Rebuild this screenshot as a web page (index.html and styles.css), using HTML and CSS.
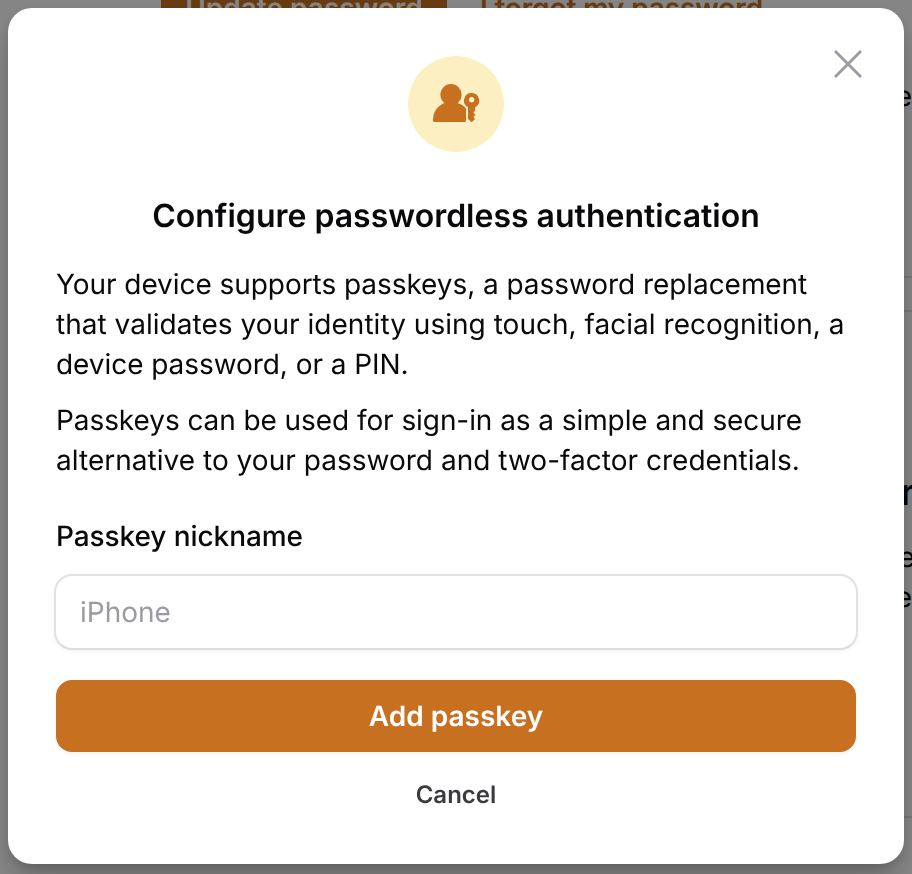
FILE: index.html
```html
<!DOCTYPE html>
<html lang="en">
<head>
<meta charset="utf-8">
<title>Configure passwordless authentication</title>
<link rel="stylesheet" href="styles.css">
</head>
<body>
<div class="page" aria-hidden="true">
  <div class="page-actions">
    <span class="page-button">Update password</span>
    <span class="page-link">I forgot my password</span>
  </div>
  <p class="page-text page-intro">e</p>
  <div class="page-divider"></div>
  <h2 class="page-heading">r</h2>
  <p class="page-text page-edge">e</p>
  <p class="page-text">e</p>
  <div class="page-rule"></div>
</div>
<div class="overlay">
  <main class="dialog" role="dialog" aria-labelledby="title">
    <button class="close" aria-label="Close">
      <svg viewBox="0 0 32 32"><path d="M3 3 29 29M29 3 3 29"/></svg>
    </button>
    <div class="badge">
      <svg viewBox="0 0 48 40">
        <circle cx="19" cy="10.700" r="10.6"/>
        <path d="M14 16H24V18.500C30 20.500 32 22 34 24.500V36.500Q34 38 32.500 38H2.500Q1 38 1 36.500C1 28 5 21.500 14 18.500Z"/>
        <path fill-rule="evenodd" d="M39.700 9A7.600 7.600 0 0 1 43.200 23.300V26.500L41.500 28.500 43.500 31 41.500 33 43 35 39.700 38.300 36 35V23.300A7.600 7.600 0 0 1 39.700 9ZM39.700 13.100A2.600 2.600 0 1 0 39.700 18.300 2.600 2.600 0 0 0 39.700 13.100Z"/>
      </svg>
    </div>
    <h1 class="title" id="title">Configure passwordless authentication</h1>
    <div class="copy">
      <p><span class="snug">Your device supports passkeys, a password replacement</span> <span class="loose">that validates your identity using touch, facial recognition, a</span> <span class="snug">device password, or a PIN.</span></p>
      <p><span class="tight">Passkeys can be used for sign-in as a simple and secure</span> <span class="loose">alternative to your password and two-factor credentials.</span></p>
    </div>
    <label class="label" for="nickname">Passkey nickname</label>
    <input class="input" id="nickname" type="text" placeholder="iPhone">
    <button class="submit">Add passkey</button>
    <button class="cancel">Cancel</button>
  </main>
</div>
</body>
</html>
```
FILE: styles.css
```css
* { box-sizing: border-box; }
body {
  margin: 0;
  height: 874px;
  overflow: hidden;
  background: #fff;
  color: #09090b;
  font-family: Inter, "Liberation Sans", sans-serif;
  text-rendering: geometricPrecision;
}
h1, h2, p { margin: 0; }
button { border: 0; padding: 0; background: none; font-family: inherit; text-rendering: inherit; }

.page { height: 874px; overflow: hidden; }
.page-actions {
  display: flex;
  margin-top: -28px;
  padding-left: 161px;
  height: 72px;
  font-size: 28px;
  font-weight: 600;
  line-height: 72px;
  white-space: nowrap;
}
.page-button { width: 286px; background: #c77020; color: #fff; text-align: center; }
.page-link { margin-left: 33px; color: #c77020; letter-spacing: -.1px; }
.page-text { font-size: 28px; line-height: 40px; text-align: right; }
.page-intro { margin-top: 32px; }
.page-divider {
  width: 20px;
  height: 36px;
  margin: 160px 0 0 auto;
  border: solid #e4e4e7;
  border-width: 2px 0;
}
.page-heading {
  margin-top: 157px;
  padding-left: 901px;
  font-size: 36px;
  font-weight: 500;
  line-height: 46px;
}
.page-edge { margin-top: 22px; margin-right: -3px; }
.page-rule { width: 20px; height: 2px; margin: 199px 0 0 auto; background: #e4e4e7; }

.overlay {
  position: fixed;
  inset: 0;
  padding: 8px;
  background: rgba(0, 0, 0, .48);
}
.dialog {
  position: relative;
  display: flex;
  flex-direction: column;
  height: 856px;
  padding: 48px;
  border-radius: 24px;
  background: #fff;
  box-shadow: 0 20px 30px -6px rgba(0, 0, 0, .22), 0 4px 12px rgba(0, 0, 0, .12);
}
.close { position: absolute; top: 40px; right: 40px; width: 32px; height: 32px; }
.close svg { display: block; stroke: #9c9ca4; stroke-width: 3; fill: none; }
.badge {
  display: flex;
  align-items: center;
  justify-content: center;
  align-self: center;
  width: 96px;
  height: 96px;
  border-radius: 50%;
  background: #fcf0c3;
}
.badge svg { width: 48px; height: 40px; fill: #c77020; }
.title { margin-top: 40px; font-size: 32px; font-weight: 600; line-height: 48px; text-align: center; white-space: nowrap; }
.copy { display: flex; flex-direction: column; gap: 16px; margin-top: 24px; font-size: 28px; line-height: 40px; }
.snug { letter-spacing: -.06px; }
.tight { letter-spacing: -.075px; }
.loose { letter-spacing: .025px; }
.label { margin-top: 36px; font-size: 28px; font-weight: 500; line-height: 40px; letter-spacing: -.08px; }
.input {
  height: 76px;
  margin: 18px -2px 0;
  padding: 0 24px;
  border: 2px solid #e2e2e3;
  border-bottom-color: #dcdcdd;
  border-radius: 18px;
  background: #fff;
  box-shadow: 0 2px 3px rgba(0, 0, 0, .04);
  color: #09090b;
  font: 400 28px/40px Inter, "Liberation Sans", sans-serif;
  text-rendering: inherit;
}
.input::placeholder { color: #9b9ba3; opacity: 1; }
.submit {
  height: 72px;
  margin-top: 30px;
  border-radius: 16px;
  background: #c77020;
  box-shadow: 0 2px 4px rgba(0, 0, 0, .05);
  color: #fff;
  font-size: 28px;
  font-weight: 600;
  line-height: 40px;
}
.cancel { align-self: center; margin-top: 27px; color: #3b3b3f; font-size: 24px; font-weight: 600; line-height: 32px; }
```
